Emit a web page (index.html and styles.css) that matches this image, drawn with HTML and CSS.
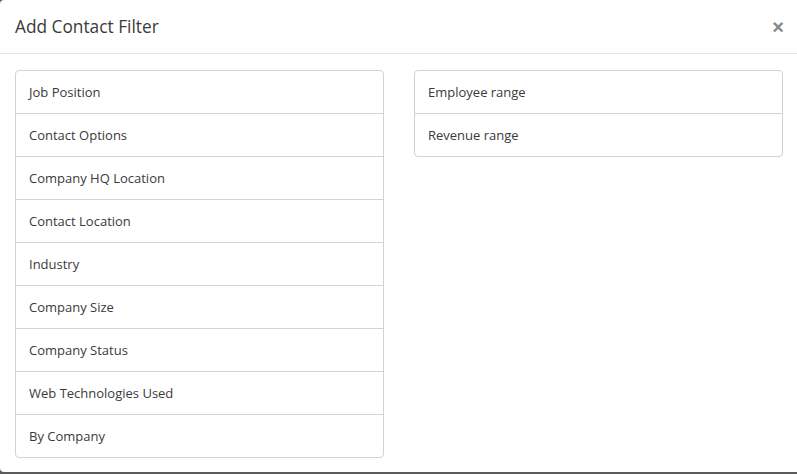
FILE: index.html
```html
<!DOCTYPE html>
<html lang="en">
<head>
    <meta charset="UTF-8">
    <meta name="viewport" content="width=device-width, initial-scale=1.0">
    <title>Add Contact Filter</title>
    <link rel="stylesheet" href="styles.css">
</head>
<body>

    <div class="modal">
        <div class="modal-header">
            <h4 class="modal-title">Add Contact Filter</h4>
            <button class="close" type="button">&times;</button>
        </div>

        <div class="modal-body">
            <div class="row">
                <div class="col">
                    <ul class="list-group">
                        <li class="list-item">Job Position</li>
                        <li class="list-item">Contact Options</li>
                        <li class="list-item">Company HQ Location</li>
                        <li class="list-item">Contact Location</li>
                        <li class="list-item">Industry</li>
                        <li class="list-item">Company Size</li>
                        <li class="list-item">Company Status</li>
                        <li class="list-item">Web Technologies Used</li>
                        <li class="list-item">By Company</li>
                    </ul>
                </div>
                <div class="col">
                    <ul class="list-group">
                        <li class="list-item">Employee range</li>
                        <li class="list-item">Revenue range</li>
                    </ul>
                </div>
            </div>
        </div>
    </div>

</body>
</html>
```

FILE: styles.css
```css
body {
    font-family: "Open Sans", "Noto Sans", sans-serif;
    margin: 0;
    height: 474px;
    overflow: hidden;
    background-color: #5a5a5a;
    color: #333;
}
.modal {
    width: 800px;
    height: 472px;
    background-color: #fff;
    border-radius: 4px;
}
.modal-header {
    display: flex;
    align-items: center;
    justify-content: space-between;
    height: 53px;
    padding: 0 15px;
    border-bottom: 1px solid #e5e5e5;
}
.modal-title {
    margin: 0;
    font-size: 17.3px;
    font-weight: normal;
    color: #3a3a3a;
}
.close {
    margin-right: 1px;
    padding: 0;
    border: none;
    background: none;
    font-family: "Liberation Sans", Arial, sans-serif;
    font-size: 20px;
    font-weight: bold;
    line-height: 1;
    color: #888;
    cursor: pointer;
}
.modal-body {
    padding: 16px 15px;
}
.row {
    display: flex;
    gap: 30px;
    width: 768px;
}
.col {
    flex: 1;
}
.list-group {
    list-style: none;
    margin: 0;
    padding: 0;
}
.list-item {
    padding: 10px 13px;
    margin-bottom: -1px;
    border: 1px solid #d2d2d2;
    font-size: 13px;
    line-height: 22px;
    color: #3a3a3a;
}
.list-item:first-child {
    border-top-left-radius: 4px;
    border-top-right-radius: 4px;
}
.list-item:last-child {
    border-bottom-left-radius: 4px;
    border-bottom-right-radius: 4px;
}
```
